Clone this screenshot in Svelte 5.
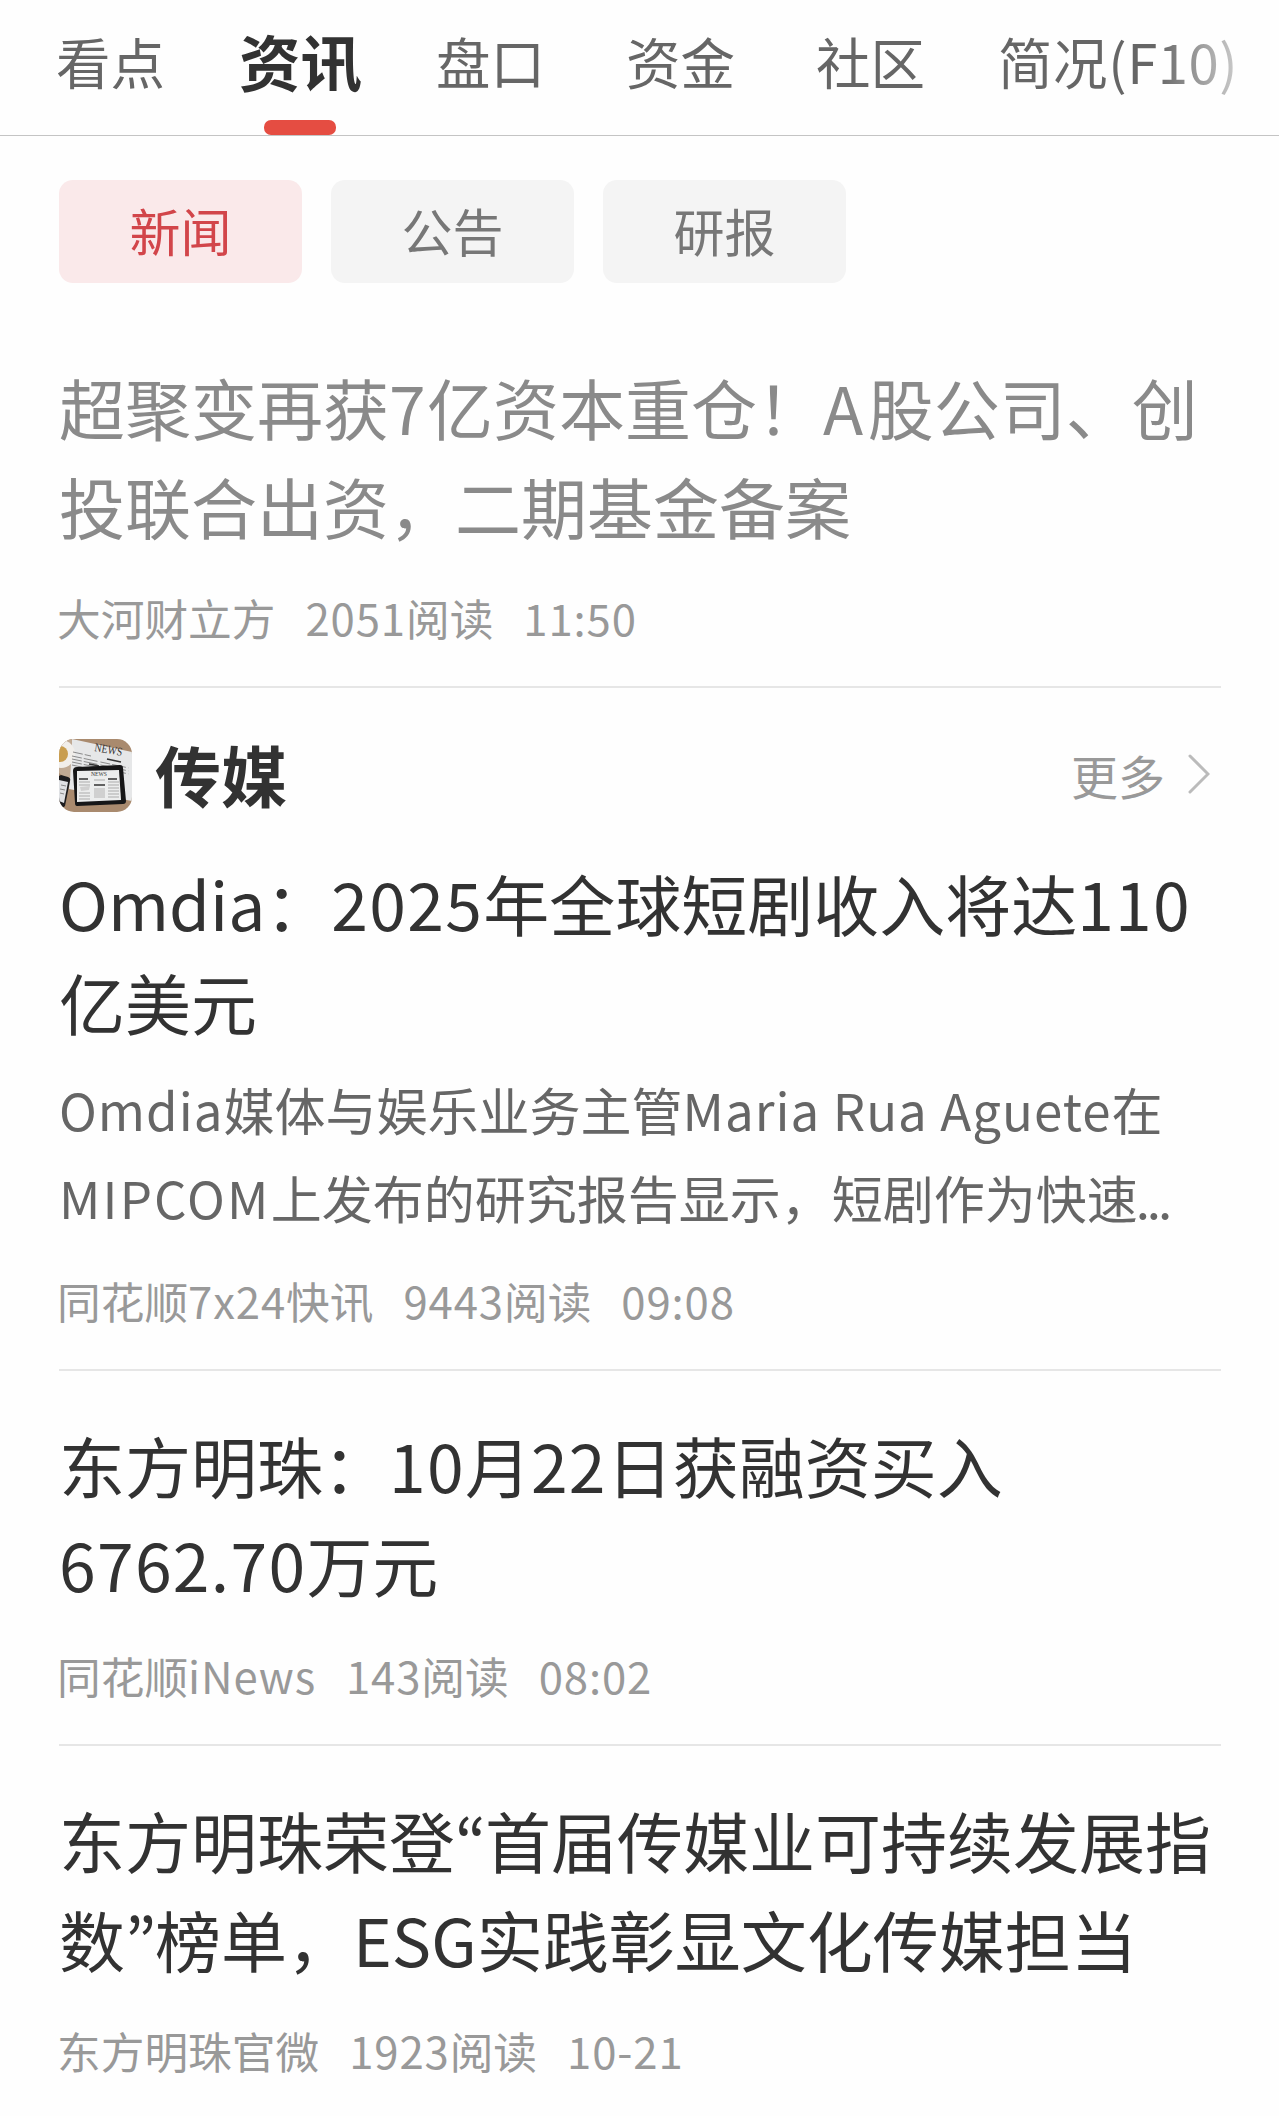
<script>
    const tabs = ['看点', '资讯', '盘口', '资金', '社区', '简况(F10)'];
    const filters = ['新闻', '公告', '研报'];

    let activeTab = $state(1);
    let activeFilter = $state(0);

    const articles = [
        {
            read: true,
            title: ['超聚变再获7亿资本重仓！A股公司、创', '投联合出资，二期基金备案'],
            meta: ['大河财立方', '2051阅读', '11:50']
        },
        {
            section: '传媒',
            title: ['Omdia：2025年全球短剧收入将达110', '亿美元'],
            summary: ['Omdia媒体与娱乐业务主管Maria Rua Aguete在', 'MIPCOM上发布的研究报告显示，短剧作为快速...'],
            meta: ['同花顺7x24快讯', '9443阅读', '09:08']
        },
        {
            title: ['东方明珠：10月22日获融资买入', '6762.70万元'],
            meta: ['同花顺iNews', '143阅读', '08:02']
        },
        {
            title: ['东方明珠荣登“首届传媒业可持续发展指', '数”榜单，ESG实践彰显文化传媒担当'],
            meta: ['东方明珠官微', '1923阅读', '10-21']
        }
    ];

    function kindOf(t) {
        if (t === '...') return 'dots';
        if (/^[“”]/.test(t)) return 'quote';
        if (/^[0-9.:\-]/.test(t)) return 'num';
        if (/^[A-Z]$/.test(t)) return 'letter';
        if (/^[A-Z]+$/.test(t)) return 'caps';
        if (/^[A-Za-z ]/.test(t)) return 'latin';
        return 'han';
    }

    // split into digit, latin, quote and chinese runs, each has its own tracking
    function runs(text) {
        return text.match(/[“”]|[0-9.:\-]+|[A-Za-z ]+|[^0-9A-Za-z.:\- “”]+/g).map((t) => ({ t, kind: kindOf(t) }));
    }
</script>

{#snippet line(text)}
    {#each runs(text) as r}<span class={r.kind}>{r.t}</span>{/each}
{/snippet}

<div class="page">
    <nav class="tabs">
        {#each tabs as tab, i}
            <button class="tab" class:active={i === activeTab} class:fade={i === tabs.length - 1} onclick={() => (activeTab = i)}>{tab}</button>
        {/each}
    </nav>

    <div class="filters">
        {#each filters as filter, i}
            <button class="filter" class:active={i === activeFilter} onclick={() => (activeFilter = i)}>{filter}</button>
        {/each}
    </div>

    {#each articles as a}
        <article class:read={a.read} class:sectioned={a.section}>
            {#if a.section}
                <header>
                    <svg class="thumb" viewBox="0 0 73 73">
                        <rect width="73" height="73" fill="#a98a6e" />
                        <path d="M13 0 73 13V62L10 50Z" fill="#e6e7e8" />
                        <path d="M0 0H13L11 42 0 34Z" fill="#c0aa94" />
                        <circle cx="2" cy="15" r="14" fill="#f1eeea" />
                        <circle cx="1" cy="15" r="8" fill="#c99d4e" />
                        <text x="35" y="12" transform="rotate(10 35 12)" font-size="12" textLength="28" lengthAdjust="spacingAndGlyphs">NEWS</text>
                        <g stroke="#8a8a8a" stroke-width="1" stroke-dasharray="10 2 14 3">
                            <path d="M14 13 32 17M13 17 70 29M13 20 70 32M13 23 70 35M13 26 50 34" />
                        </g>
                        <path d="M48 20 62 23M30 25 40 27" stroke="#333" stroke-width="1.6" />
                        <path d="M2 36 9 38Q12 39 11 42L6 67Q5 69 0 68V37Z" fill="#1c1c1e" />
                        <path d="M0 41 9 43 5 64 0 62Z" fill="#dfe1e4" />
                        <path d="M2 46 7 47M1 50 6 51M1 54 5 55" stroke="#888" />
                        <path d="M18 28 61 26Q64 26 64 29L67 62Q67 65 64 65L18 67Q16 67 16 64L14 32Q14 28 18 28Z" fill="#161617" />
                        <path d="M18 32 60 31 62 61 18 63Z" fill="#eceded" />
                        <text x="32" y="37" font-size="6.5" textLength="16" lengthAdjust="spacingAndGlyphs">NEWS</text>
                        <path d="M20 40H29M35 46H46M49 40H58" stroke="#333" stroke-width="1.4" />
                        <path d="M20 43H31M20 46H31M35 41H46M49 43H60M49 46H60M49 49H60M49 52H60M20 54H31M20 57H31M20 60H31M49 55H60M49 58H60" stroke="#ababab" />
                        <path d="M21 48 31 47 30 51 22 52ZM35 49H46V59H35Z" fill="#d0d0d0" />
                    </svg>
                    <h2>{a.section}</h2>
                    <a class="more" href="#more">
                        更多
                        <svg class="chevron" viewBox="0 0 22 40"><path d="M2 2 20 20 2 38" /></svg>
                    </a>
                </header>
            {/if}
            <h3>
                {#each a.title as text}<div>{@render line(text)}</div>{/each}
            </h3>
            {#if a.summary}
                <div class="summary">
                    {#each a.summary as text}<div>{@render line(text)}</div>{/each}
                </div>
            {/if}
            <div class="meta">
                {#each a.meta as text}<div>{@render line(text)}</div>{/each}
            </div>
        </article>
    {/each}
</div>

<style>
:global(body) {
    margin: 0;
    background: #fefefe;
}

.page {
    width: 1279px;
    height: 2116px;
    overflow: hidden;
    font-family: "Noto Sans CJK SC", sans-serif;
    color: #323232;
    white-space: nowrap;
}

button {
    border: 0;
    padding: 0;
    background: none;
    font: inherit;
    color: inherit;
}

.tabs {
    display: flex;
    gap: 81px;
    height: 135px;
    padding-left: 56px;
    border-bottom: 1px solid #c4c4c4;
}
.tab {
    position: relative;
    flex: none;
    height: 135px;
    padding-bottom: 14px;
    font-size: 54.5px;
    color: #666;
}
.tab.active {
    margin: 0 -7px;
    font-size: 61.5px;
    font-weight: 700;
    color: #323232;
}
.tab.active::after {
    content: '';
    position: absolute;
    left: 50%;
    bottom: 0;
    width: 72px;
    height: 15px;
    margin-left: -37px;
    border-radius: 7px;
    background: #e54d42;
}
.tab.fade {
    margin-left: -8px;
    letter-spacing: 0.01em;
    background: linear-gradient(90deg, #666 66%, #ccc 100%);
    background-clip: text;
    color: transparent;
}

.filters {
    display: flex;
    gap: 29px;
    padding: 44px 59px 0;
}
.filter {
    width: 243px;
    height: 103px;
    padding-bottom: 3px;
    border-radius: 14px;
    background: #f4f4f4;
    font-size: 51px;
    color: #777;
}
.filter.active {
    background: #fae9ea;
    color: #d2454a;
}

article {
    margin: 0 58px 0 59px;
    padding: 44px 0 39px;
    border-bottom: 2px solid #e6e6e6;
}
article:last-child {
    border: 0;
}
article.read {
    padding-top: 74px;
}
article.sectioned {
    padding-top: 38px;
}

header {
    display: flex;
    align-items: center;
    height: 100px;
    margin-bottom: 27px;
}
.thumb {
    width: 73px;
    height: 73px;
    margin-top: -2px;
    border-radius: 15px;
    font-family: "Liberation Serif", serif;
    fill: #333;
}
h2 {
    margin: -6px 0 0 23px;
    font-size: 66px;
    line-height: 96px;
    font-weight: 700;
}
.more {
    display: flex;
    align-items: center;
    gap: 23px;
    margin: -4px 11px 0 auto;
    font-size: 47px;
    color: #999;
    text-decoration: none;
}
.chevron {
    width: 22px;
    height: 40px;
    fill: none;
    stroke: #bbb;
    stroke-width: 3;
    stroke-linecap: round;
}

h3 {
    margin: 0;
    font-size: 66px;
    line-height: 98.5px;
    font-weight: 400;
}
.read h3 {
    color: #8a8a8a;
}
.num {
    letter-spacing: 0.02em;
}
.letter {
    letter-spacing: 0.07em;
}
/* the SC quotes are full width, the KR ones are proportional */
.quote {
    display: inline-block;
    width: 30px;
    font-family: "Noto Sans CJK KR", sans-serif;
    line-height: 1;
    text-align: center;
}
.summary {
    margin-top: 15px;
    font-size: 51px;
    line-height: 88px;
    color: #666;
}
.summary .latin {
    letter-spacing: 0.02em;
}
.summary .caps {
    letter-spacing: 0.042em;
}
.dots {
    margin-left: -2px;
    letter-spacing: -0.06em;
}
.meta {
    display: flex;
    gap: 30px;
    margin: 33px 0 0 -2px;
    font-size: 43.7px;
    line-height: 60px;
    color: #999;
}
.meta .latin {
    letter-spacing: 0.02em;
}
.summary + .meta {
    margin-top: 29px;
}
</style>
